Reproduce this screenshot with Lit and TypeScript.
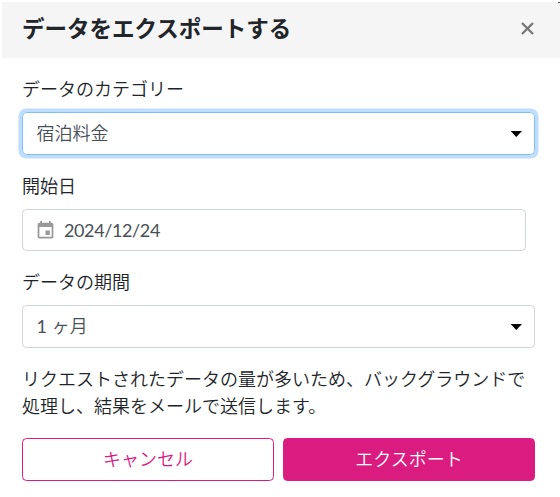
import { LitElement, html, css, svg } from "lit";
import { customElement } from "lit/decorators.js";

const caret = html`<svg class="caret" width="12" height="6" viewBox="0 0 12 6">
  ${svg`<path d="M0.6 0H12L6.3 6Z" fill="#000" />`}
</svg>`;

@customElement("app-root")
export class AppRoot extends LitElement {
  static styles = css`
    :host {
      display: block;
      height: 497px;
      box-sizing: border-box;
      padding: 2px 0 0 2px;
      overflow: hidden;
      background: #fff;
      color: #212529;
      font: 350 18px/27px Lato, "Noto Sans CJK JP", sans-serif;
    }
    * {
      box-sizing: border-box;
    }
    .header {
      position: relative;
      display: flex;
      align-items: center;
      justify-content: space-between;
      height: 56px;
      padding: 0 26px 0 20px;
      background: #f5f5f5;
    }
    .header::after {
      content: "";
      position: absolute;
      top: 0;
      right: 0;
      width: 2px;
      height: 1px;
      background: #555;
    }
    .title {
      margin: -2px 0 0;
      font-size: 22.5px;
      line-height: 34px;
      font-weight: 700;
    }
    .close {
      display: flex;
      margin-top: -4px;
      padding: 0;
      border: 0;
      background: none;
    }
    .body {
      display: flex;
      flex-direction: column;
      gap: 18px;
      padding: 18px 25px 0 20px;
    }
    .field {
      display: flex;
      flex-direction: column;
      gap: 9px;
    }
    .control {
      display: flex;
      align-items: center;
      height: 43px;
      padding: 0 12px 0 13.5px;
      border: 1px solid #ced4da;
      border-radius: 4.5px;
      color: #495057;
    }
    .focused {
      border-color: #80bdff;
      box-shadow: 0 0 0 3.6px #bfdeff;
    }
    .date {
      height: 42px;
      margin-right: 9px;
      padding-left: 12px;
      font-weight: 400;
      letter-spacing: -0.38px;
    }
    .calendar {
      margin-right: 8px;
    }
    .number {
      font-weight: 400;
    }
    .caret {
      margin-left: auto;
    }
    .note {
      margin: 0;
    }
    .actions {
      display: flex;
      gap: 9px;
    }
    .btn {
      flex: 1;
      height: 43px;
      padding: 0;
      border: 1px solid #da1c81;
      border-radius: 4.5px;
      background: #fff;
      color: #da1c81;
      font: inherit;
    }
    .primary {
      background: #da1c81;
      color: #fff;
    }
  `;

  render() {
    return html`
      <header class="header">
        <h1 class="title">データをエクスポートする</h1>
        <button class="close" aria-label="閉じる">
          <svg width="13" height="13" viewBox="0 0 13 13">
            <path d="M1 1L12 12M12 1L1 12" stroke="#777" stroke-width="2.3" />
          </svg>
        </button>
      </header>
      <main class="body">
        <div class="field">
          <label>データのカテゴリー</label>
          <div class="control focused"><span>宿泊料金</span>${caret}</div>
        </div>
        <div class="field">
          <label>開始日</label>
          <div class="control date">
            <svg class="calendar" width="21" height="21" viewBox="0 0 24 24" fill="#999">
              <path
                d="M17 12h-5v5h5v-5zM16 1v2H8V1H6v2H5c-1.11 0-1.99.9-1.99 2L3 19c0 1.1.89 2 2 2h14c1.1 0 2-.9 2-2V5c0-1.1-.9-2-2-2h-1V1h-2zm3 18H5V8h14v11z"
              />
            </svg>
            <span>2024/12/24</span>
          </div>
        </div>
        <div class="field">
          <label>データの期間</label>
          <div class="control"><span><span class="number">1</span> ヶ月</span>${caret}</div>
        </div>
        <p class="note">
          リクエストされたデータの量が多いため、バックグラウンドで<br />処理し、結果をメールで送信します。
        </p>
        <div class="actions">
          <button class="btn">キャンセル</button>
          <button class="btn primary">エクスポート</button>
        </div>
      </main>
    `;
  }
}
